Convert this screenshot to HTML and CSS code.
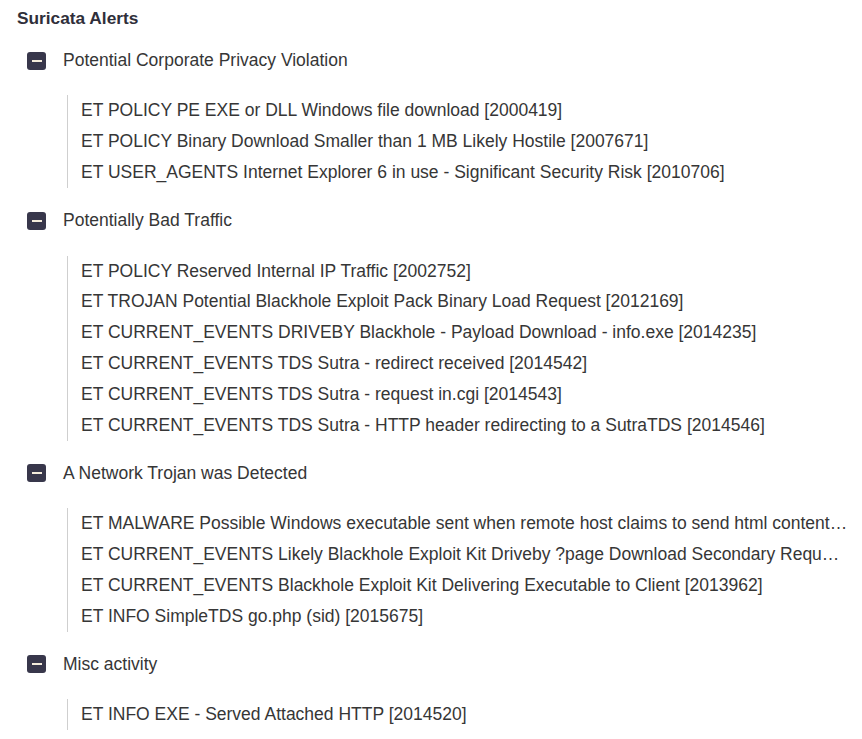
FILE: index.html
```html
<!DOCTYPE html>
<html lang="en">
<head>
<meta charset="utf-8">
<title>Suricata Alerts</title>
<link rel="stylesheet" href="styles.css">
</head>
<body>
<div class="panel">
  <h1 class="title">Suricata Alerts</h1>

  <section class="group">
    <div class="group-head"><span class="toggle"><span class="minus"></span></span><span class="group-name">Potential Corporate Privacy Violation</span></div>
    <ul class="alerts">
      <li>ET POLICY PE EXE or DLL Windows file download [2000419]</li>
      <li>ET POLICY Binary Download Smaller than 1 MB Likely Hostile [2007671]</li>
      <li>ET USER_AGENTS Internet Explorer 6 in use - Significant Security Risk [2010706]</li>
    </ul>
  </section>

  <section class="group">
    <div class="group-head"><span class="toggle"><span class="minus"></span></span><span class="group-name">Potentially Bad Traffic</span></div>
    <ul class="alerts">
      <li>ET POLICY Reserved Internal IP Traffic [2002752]</li>
      <li>ET TROJAN Potential Blackhole Exploit Pack Binary Load Request [2012169]</li>
      <li>ET CURRENT_EVENTS DRIVEBY Blackhole - Payload Download - info.exe [2014235]</li>
      <li>ET CURRENT_EVENTS TDS Sutra - redirect received [2014542]</li>
      <li>ET CURRENT_EVENTS TDS Sutra - request in.cgi [2014543]</li>
      <li>ET CURRENT_EVENTS TDS Sutra - HTTP header redirecting to a SutraTDS [2014546]</li>
    </ul>
  </section>

  <section class="group">
    <div class="group-head"><span class="toggle"><span class="minus"></span></span><span class="group-name">A Network Trojan was Detected</span></div>
    <ul class="alerts">
      <li>ET MALWARE Possible Windows executable sent when remote host claims to send html content [2009080]</li>
      <li>ET CURRENT_EVENTS Likely Blackhole Exploit Kit Driveby ?page Download Secondary Request [2014547]</li>
      <li>ET CURRENT_EVENTS Blackhole Exploit Kit Delivering Executable to Client [2013962]</li>
      <li>ET INFO SimpleTDS go.php (sid) [2015675]</li>
    </ul>
  </section>

  <section class="group">
    <div class="group-head"><span class="toggle"><span class="minus"></span></span><span class="group-name">Misc activity</span></div>
    <ul class="alerts">
      <li>ET INFO EXE - Served Attached HTTP [2014520]</li>
    </ul>
  </section>
</div>
</body>
</html>
```

FILE: styles.css
```css
html, body {
  margin: 0;
  padding: 0;
  background: #ffffff;
}

body {
  font-family: "Liberation Sans", Arial, sans-serif;
  color: #363636;
}

.panel {
  padding: 8px 14px 0 17px;
}

.title {
  margin: 0;
  font-size: 17.3px;
  line-height: 20px;
  font-weight: bold;
  color: #2f2f3a;
}

.group {
  padding: 17px 0 0 10px;
}

.group-head {
  display: flex;
  align-items: center;
  gap: 17px;
  height: 31px;
  font-size: 17.5px;
}

.toggle {
  flex: none;
  width: 19px;
  height: 18px;
  border-radius: 3px;
  background: #38374b;
  display: flex;
  align-items: center;
  justify-content: center;
}

.minus {
  width: 10px;
  height: 2px;
  background: #f4ecdc;
}

.group-name {
  white-space: nowrap;
}

.alerts {
  list-style: none;
  margin: 19.4px 0 0 40px;
  padding: 0 0 0 13px;
  border-left: 1px solid #cfcfcf;
}

.alerts li {
  font-size: 17.5px;
  line-height: 30.9px;
  white-space: nowrap;
  overflow: hidden;
  text-overflow: ellipsis;
}
```
